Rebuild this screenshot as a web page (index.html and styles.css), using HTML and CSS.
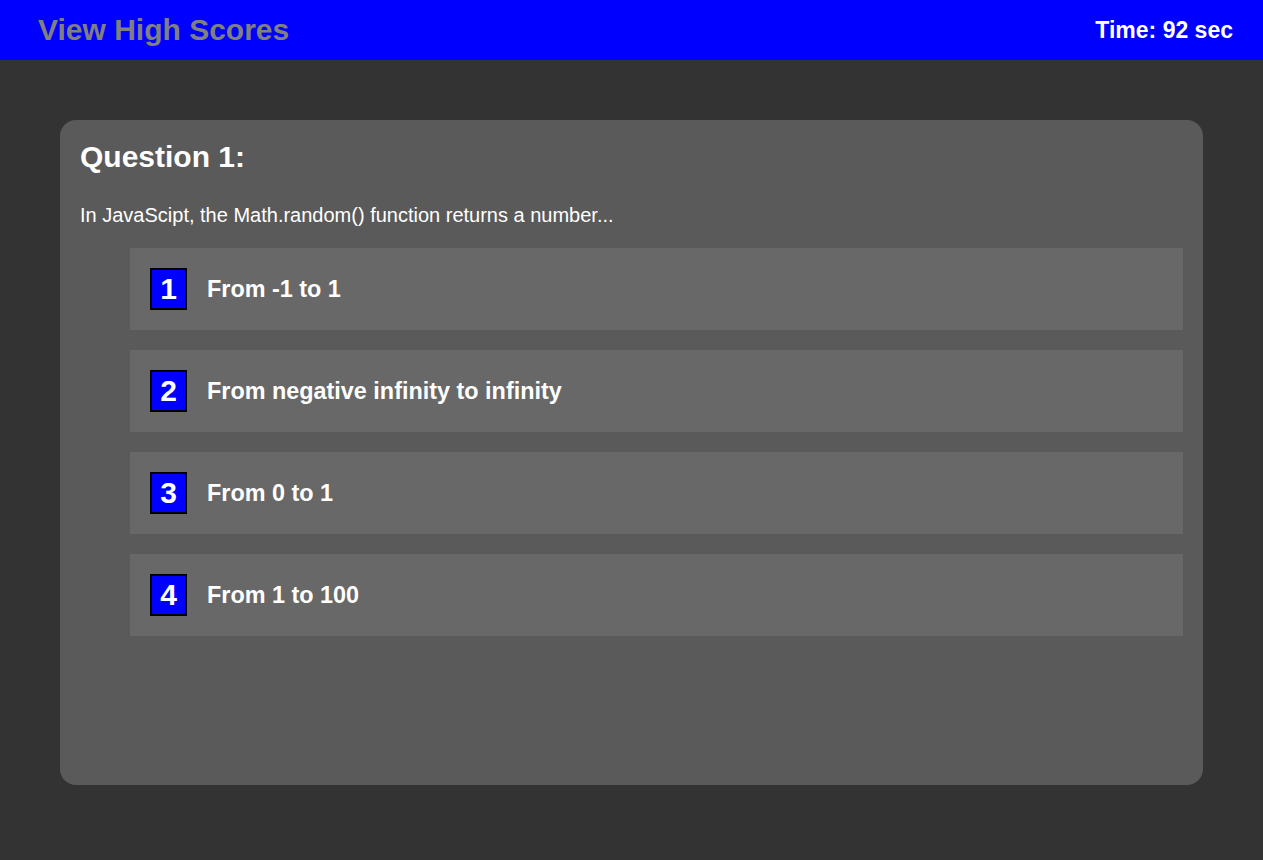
FILE: index.html
```html
<!DOCTYPE html>
<html>
<head>
<meta charset="utf-8">
<link rel="stylesheet" href="styles.css">
</head>
<body>
<header class="topbar">
  <a class="scores-link">View High Scores</a>
  <div class="timer">Time: 92 sec</div>
</header>
<main class="card">
  <h2 class="q-title">Question 1:</h2>
  <p class="q-text">In JavaScipt, the Math.random() function returns a number...</p>
  <ul class="options">
    <li class="option"><span class="num">1</span><span class="opt-text">From -1 to 1</span></li>
    <li class="option"><span class="num">2</span><span class="opt-text">From negative infinity to infinity</span></li>
    <li class="option"><span class="num">3</span><span class="opt-text">From 0 to 1</span></li>
    <li class="option"><span class="num">4</span><span class="opt-text">From 1 to 100</span></li>
  </ul>
</main>
</body>
</html>
```

FILE: styles.css
```css
html, body {
  margin: 0;
  padding: 0;
}
body {
  background: #333333;
  font-family: "Liberation Sans", Arial, sans-serif;
  color: #ffffff;
  height: 860px;
}
.topbar {
  height: 60px;
  background: #0000ff;
  display: flex;
  align-items: center;
  justify-content: space-between;
  padding: 0 30px 0 38px;
}
.scores-link {
  color: #808080;
  font-weight: bold;
  font-size: 30px;
}
.timer {
  font-weight: bold;
  font-size: 23px;
}
.card {
  margin: 60px 60px 0 60px;
  height: 665px;
  box-sizing: border-box;
  background: #5a5a5a;
  border-radius: 16px;
  padding: 20px;
}
.q-title {
  margin: 0;
  font-size: 30px;
  line-height: 34px;
}
.q-text {
  margin: 30px 0 0 0;
  font-size: 20px;
  line-height: 23px;
}
.options {
  list-style: none;
  margin: 21px 0 0 50px;
  padding: 0;
  display: flex;
  flex-direction: column;
  gap: 20px;
}
.option {
  background: #686868;
  padding: 20px;
  display: flex;
  align-items: center;
  gap: 20px;
}
.num {
  width: 33px;
  height: 38px;
  background: #0000ff;
  border: 2px solid #000000;
  display: flex;
  align-items: center;
  justify-content: center;
  font-weight: bold;
  font-size: 30px;
}
.opt-text {
  font-weight: bold;
  font-size: 23.4px;
}
```
